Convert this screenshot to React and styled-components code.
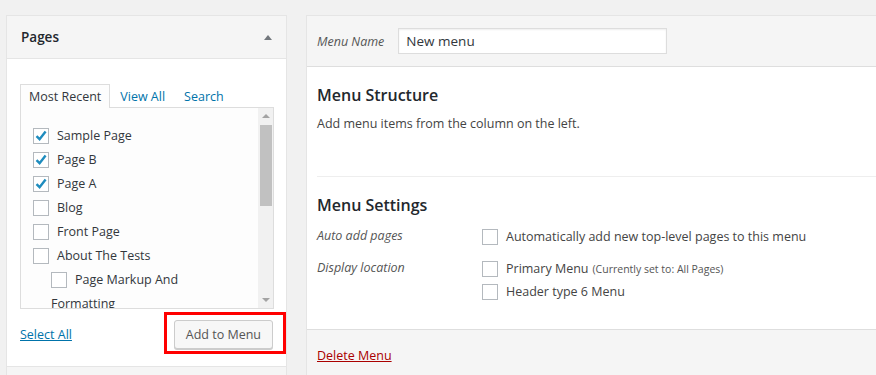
import React from "react";
import styled, { createGlobalStyle } from "styled-components";

const GlobalStyle = createGlobalStyle`
  html, body {
    margin: 0;
    padding: 0;
    background: #f1f1f1;
  }
  body {
    font-family: "Open Sans", "Noto Sans", sans-serif;
    font-size: 12.5px;
    color: #444;
  }
`;

const Screen = styled.div`
  width: 876px;
  height: 375px;
  overflow: hidden;
  display: flex;
  align-items: flex-start;
  gap: 19px;
  padding: 15px 0 0 6px;
  box-sizing: border-box;
`;

const LeftColumn = styled.div`
  width: 281px;
  flex-shrink: 0;
  display: flex;
  flex-direction: column;
`;

const Box = styled.div`
  background: #fff;
  border: 1px solid #e5e5e5;
  box-sizing: border-box;
  & + & {
    border-top: 0;
  }
`;

const BoxHeader = styled.div`
  height: 42px;
  background: #f5f5f5;
  border-bottom: 1px solid #e5e5e5;
  display: flex;
  align-items: center;
  justify-content: space-between;
  padding: 0 14px 0 14px;
`;

const BoxTitle = styled.h3`
  margin: 0;
  font-size: 13.5px;
  font-weight: 600;
  color: #23282d;
`;

const Toggle = styled.span`
  width: 0;
  height: 0;
  border-left: 4px solid transparent;
  border-right: 4px solid transparent;
  border-bottom: 5px solid #72777c;
`;

const BoxBody = styled.div`
  padding: 24px 12px 12px 13px;
`;

const Tabs = styled.div`
  display: flex;
  align-items: flex-end;
`;

const Tab = styled.span`
  height: 24px;
  display: flex;
  align-items: center;
  padding: 0 8px 1px;
  box-sizing: border-box;
  margin-right: ${({ $active }) => ($active ? "1px" : "1px")};
  color: ${({ $active }) => ($active ? "#32373c" : "#0073aa")};
  background: ${({ $active }) => ($active ? "#fdfdfd" : "transparent")};
  border: 1px solid ${({ $active }) => ($active ? "#ddd" : "transparent")};
  border-bottom: 0;
  position: relative;
  top: 1px;
`;

const ListBox = styled.div`
  height: 200px;
  border: 1px solid #ddd;
  background: #fdfdfd;
  display: flex;
`;

const List = styled.ul`
  flex: 1;
  list-style: none;
  margin: 0;
  padding: 16px 32px 0 12px;
  overflow: hidden;
`;

const Item = styled.li`
  line-height: 24px;
  color: #32373c;
  padding-left: ${({ $level }) => ($level ? 18 : 0)}px;
`;

const Check = styled.span`
  display: inline-block;
  vertical-align: -4px;
  width: 16px;
  height: 16px;
  border: 1px solid #b4b9be;
  background: #fff;
  box-sizing: border-box;
  margin-right: 8px;
  position: relative;
`;

const Tick = styled.svg`
  position: absolute;
  left: 0;
  top: 0;
`;

const Scrollbar = styled.div`
  width: 15px;
  background: #f1f1f1;
  display: flex;
  flex-direction: column;
  align-items: center;
`;

const Arrow = styled.span`
  width: 0;
  height: 0;
  margin: 6px 0;
  border-left: 4px solid transparent;
  border-right: 4px solid transparent;
  ${({ $down }) =>
    $down ? "border-top: 4px solid #a3a3a3;" : "border-bottom: 4px solid #a3a3a3;"}
`;

const Thumb = styled.div`
  width: 12px;
  height: 81px;
  background: #c1c1c1;
  margin-top: 1px;
`;

const Spacer = styled.div`
  flex: 1;
`;

const BoxFooter = styled.div`
  display: flex;
  align-items: center;
  justify-content: space-between;
  margin-top: 3px;
`;

const Link = styled.a`
  color: ${({ $danger }) => ($danger ? "#a00" : "#0073aa")};
  text-decoration: underline;
  padding-top: ${({ $danger }) => ($danger ? 0 : 3)}px;
`;

const Highlight = styled.div`
  border: 3px solid #ff0000;
  padding: 5px 10px 2px 7px;
  margin-right: -12px;
`;

const Button = styled.button`
  height: 29px;
  padding: 0 11px;
  font-family: inherit;
  font-size: 12.5px;
  color: #555;
  background: #f7f7f7;
  border: 1px solid #ccc;
  border-radius: 3px;
  box-shadow: 0 1px 0 #ccc;
`;

const Editor = styled.div`
  width: 600px;
  flex-shrink: 0;
  background: #fff;
  border: 1px solid #e5e5e5;
  border-right: 0;
`;

const EditorHeader = styled.div`
  height: 50px;
  background: #f5f5f5;
  border-bottom: 1px solid #dedede;
  display: flex;
  align-items: center;
  padding: 0 10px;
  gap: 14px;
`;

const Italic = styled.span`
  font-style: italic;
  color: #555;
`;

const NameInput = styled.div`
  width: 269px;
  height: 26px;
  box-sizing: border-box;
  border: 1px solid #ddd;
  box-shadow: inset 0 1px 2px rgba(0, 0, 0, 0.07);
  background: #fff;
  display: flex;
  align-items: center;
  padding: 0 7px;
  font-size: 13.5px;
  color: #32373c;
`;

const EditorBody = styled.div`
  padding: 0 0 0 10px;
`;

const Section = styled.div`
  padding: ${({ $pad }) => $pad};
  border-top: ${({ $rule }) => ($rule ? "1px solid #eee" : "0")};
`;

const Heading = styled.h3`
  margin: 0;
  font-size: 16px;
  font-weight: 600;
  color: #23282d;
  line-height: 24px;
`;

const Text = styled.p`
  margin: 7px 0 0;
  color: #444;
  line-height: 20px;
`;

const SettingRow = styled.div`
  display: grid;
  grid-template-columns: 165px 1fr;
  margin-top: ${({ $gap }) => $gap}px;
`;

const Options = styled.div`
  display: flex;
  flex-direction: column;
  gap: 3px;
`;

const Option = styled.label`
  display: flex;
  align-items: center;
  line-height: 20px;
  color: #444;
`;

const Small = styled.span`
  font-size: 10.5px;
  margin-left: 4px;
  color: #555;
`;

const EditorFooter = styled.div`
  background: #f5f5f5;
  border-top: 1px solid #dedede;
  padding: 17px 10px 16px;
`;

const CheckBox = ({ checked }) => (
  <Check>
    {checked && (
      <Tick width="14" height="14" viewBox="0 0 14 14">
        <path d="M2.5 7.2 L5.6 10.2 L11.6 2.6" fill="none" stroke="#1e8cbe" strokeWidth="2.4" />
      </Tick>
    )}
  </Check>
);

const pages = [
  { name: "Sample Page", checked: true },
  { name: "Page B", checked: true },
  { name: "Page A", checked: true },
  { name: "Blog" },
  { name: "Front Page" },
  { name: "About The Tests" },
  { name: "Page Markup And Formatting", level: 1 },
];

export default function App() {
  return (
    <>
      <GlobalStyle />
      <Screen>
        <LeftColumn>
          <Box>
            <BoxHeader>
              <BoxTitle>Pages</BoxTitle>
              <Toggle />
            </BoxHeader>
            <BoxBody>
              <Tabs>
                <Tab $active>Most Recent</Tab>
                <Tab>View All</Tab>
                <Tab>Search</Tab>
              </Tabs>
              <ListBox>
                <List>
                  {pages.map((p) => (
                    <Item key={p.name} $level={p.level}>
                      <CheckBox checked={p.checked} />
                      {p.name}
                    </Item>
                  ))}
                </List>
                <Scrollbar>
                  <Arrow />
                  <Thumb />
                  <Spacer />
                  <Arrow $down />
                </Scrollbar>
              </ListBox>
              <BoxFooter>
                <Link>Select All</Link>
                <Highlight>
                  <Button>Add to Menu</Button>
                </Highlight>
              </BoxFooter>
            </BoxBody>
          </Box>
          <Box>
            <BoxHeader />
          </Box>
        </LeftColumn>

        <Editor>
          <EditorHeader>
            <Italic>Menu Name</Italic>
            <NameInput>New menu</NameInput>
          </EditorHeader>
          <EditorBody>
            <Section $pad="16px 0 42px">
              <Heading>Menu Structure</Heading>
              <Text>Add menu items from the column on the left.</Text>
            </Section>
            <Section $rule $pad="16px 0 27px">
              <Heading>Menu Settings</Heading>
              <SettingRow $gap={10}>
                <Italic>Auto add pages</Italic>
                <Option>
                  <CheckBox />
                  Automatically add new top-level pages to this menu
                </Option>
              </SettingRow>
              <SettingRow $gap={12}>
                <Italic>Display location</Italic>
                <Options>
                  <Option>
                    <CheckBox />
                    Primary Menu<Small>(Currently set to: All Pages)</Small>
                  </Option>
                  <Option>
                    <CheckBox />
                    Header type 6 Menu
                  </Option>
                </Options>
              </SettingRow>
            </Section>
          </EditorBody>
          <EditorFooter>
            <Link $danger>Delete Menu</Link>
          </EditorFooter>
        </Editor>
      </Screen>
    </>
  );
}
